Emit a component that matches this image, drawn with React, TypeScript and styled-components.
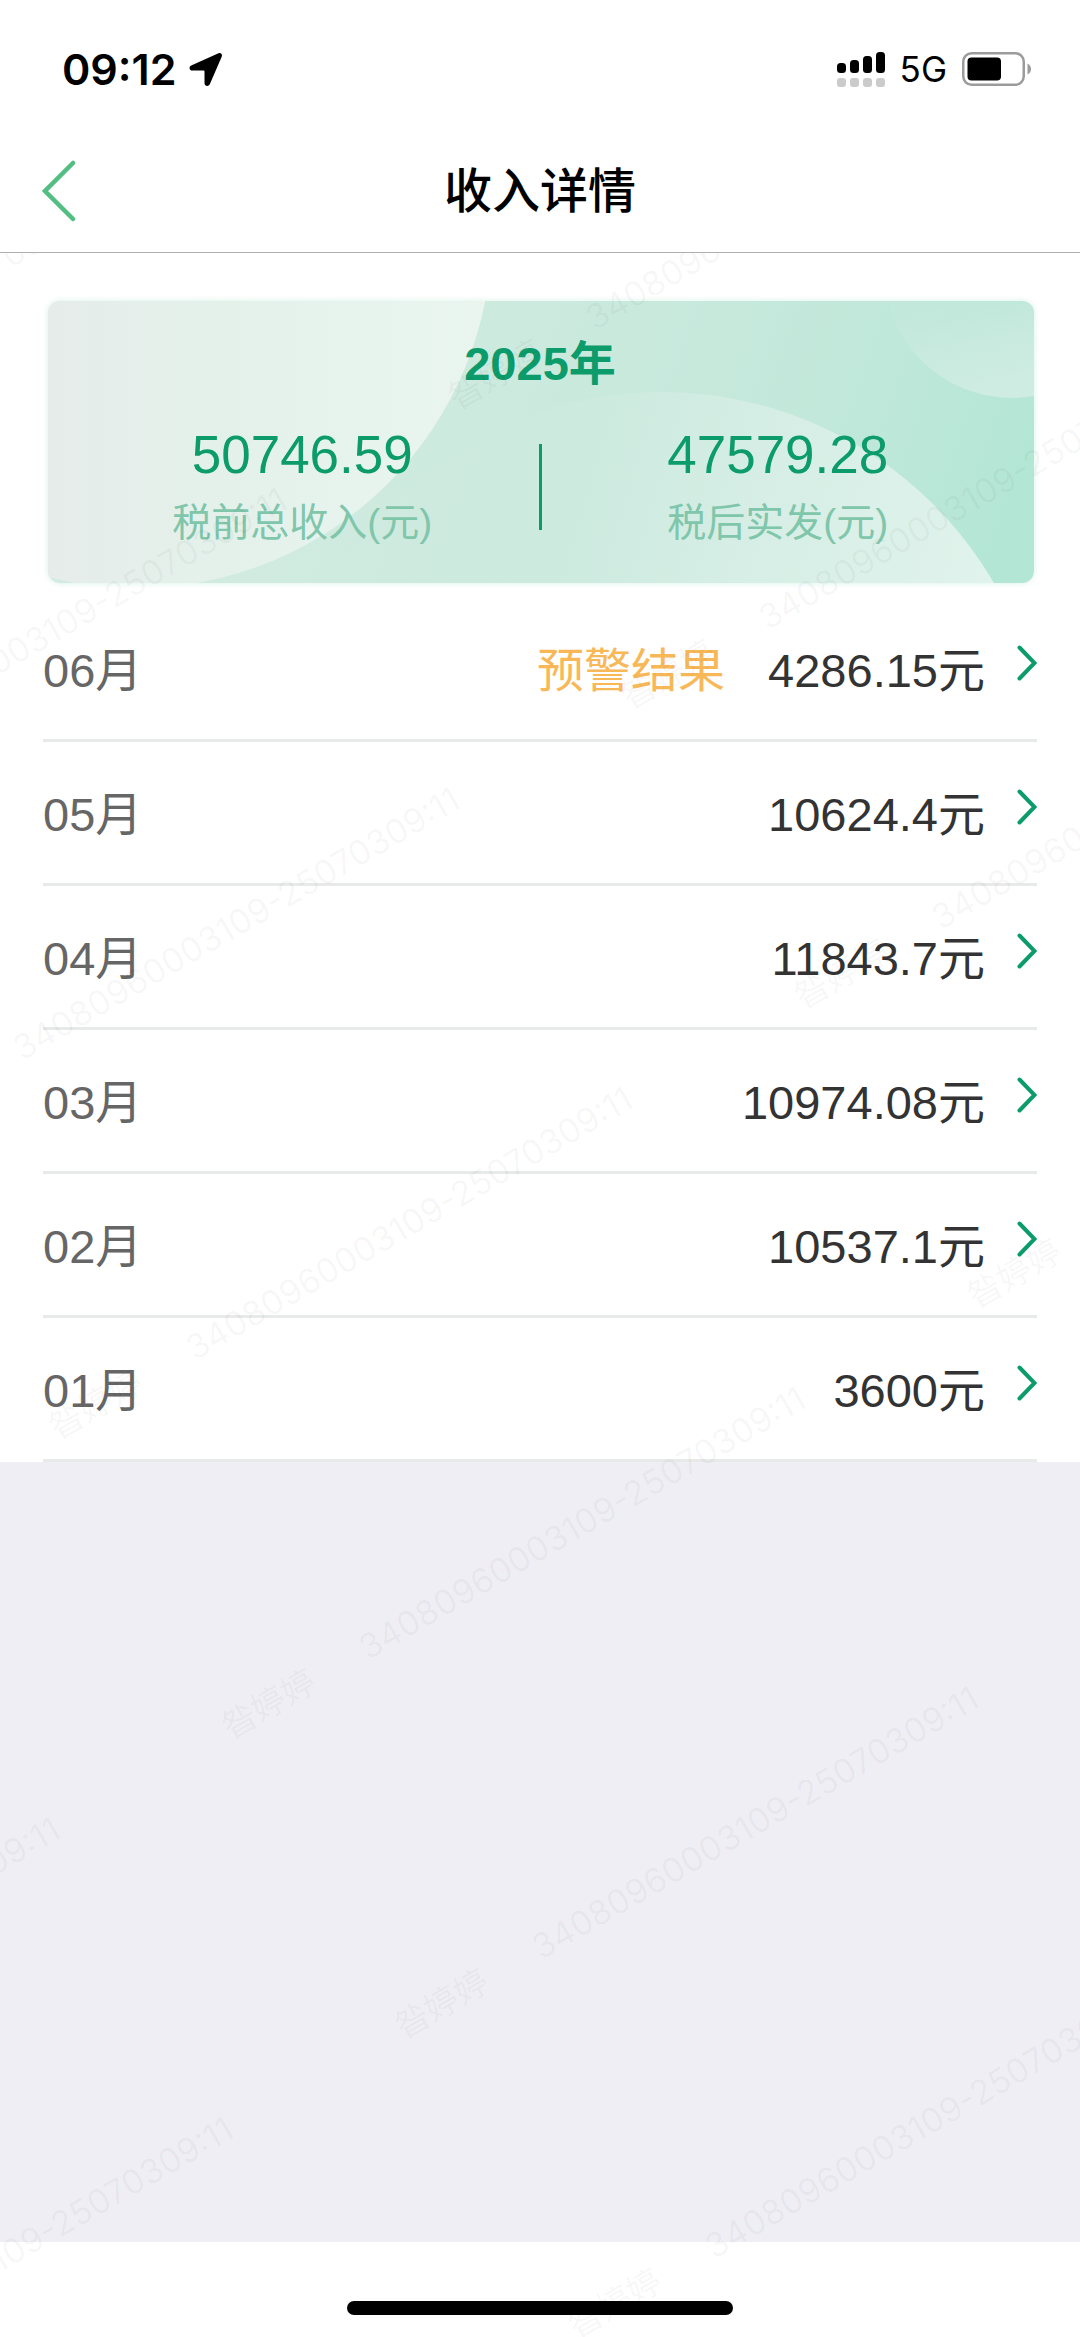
import React from "react";
import styled, { createGlobalStyle } from "styled-components";

const GREEN = "#0c9b6a";
const SYSTEM_FONT = `Inter, "Noto Sans CJK SC", sans-serif`;

const GlobalStyle = createGlobalStyle`
  * { box-sizing: border-box; }
  body {
    margin: 0;
    background: #ffffff;
    font-family: "Liberation Sans", "Noto Sans CJK SC", sans-serif;
  }
  h1, h2, p, ul, dl, dd { margin: 0; padding: 0; }
  button { border: 0; padding: 0; background: none; font: inherit; color: inherit; cursor: pointer; }
`;

const Screen = styled.div`
  display: flex;
  flex-direction: column;
  min-height: 100vh;
  background: #ffffff;
`;

const StatusBar = styled.div`
  display: flex;
  align-items: center;
  justify-content: space-between;
  height: 128px;
  padding: 10px 48px 0 62px;
  font-family: ${SYSTEM_FONT};
  color: #000000;
`;

const StatusGroup = styled.div<{ $gap: number }>`
  display: flex;
  align-items: center;
  gap: ${(p) => p.$gap}px;
`;

const Time = styled.time`
  font-size: 43px;
  line-height: 48px;
  font-weight: 600;
`;

const Network = styled.span`
  font-size: 35px;
  line-height: 40px;
`;

const NavBar = styled.header`
  display: grid;
  grid-template-columns: 96px 1fr 96px;
  align-items: center;
  height: 125px;
  padding-top: 4px;
  border-bottom: 1px solid #b0b0b0;
`;

const BackButton = styled.button`
  display: flex;
  align-items: center;
  height: 96px;
  padding-left: 40px;
`;

const NavTitle = styled.h1`
  text-align: center;
  font-size: 48px;
  line-height: 64px;
  font-weight: 500;
  color: #000000;
`;

const Body = styled.div`
  position: relative;
  display: flex;
  flex: 1;
  flex-direction: column;
  overflow: hidden;
`;

const Content = styled.main`
  flex: 1;
  background: #efeef4;
`;

const Sheet = styled.div`
  padding-top: 48px;
  background: #ffffff;
`;

const Card = styled.section`
  position: relative;
  height: 282px;
  margin: 0 46px 15px 48px;
  padding: 33px 20px 0 18px;
  border-radius: 12px;
  box-shadow: 0 0 6px #d6f1e7;
  color: ${GREEN};
`;

const CardArt = styled.svg`
  position: absolute;
  inset: 0;
  width: 100%;
  height: 100%;
  border-radius: 12px;
`;

const CardYear = styled.h2`
  position: relative;
  text-align: center;
  font-size: 47px;
  line-height: 60px;
  font-weight: 700;
`;

const Totals = styled.dl`
  position: relative;
  display: grid;
  grid-template-columns: 1fr 3px 1fr;
  align-items: center;
  padding-top: 29px;
`;

const Divider = styled.div`
  height: 86px;
  margin-top: 4px;
  background: ${GREEN};
`;

const Total = styled.div`
  display: flex;
  flex-direction: column-reverse;
  align-items: center;
  gap: 12px;
`;

const TotalLabel = styled.dt`
  font-size: 39px;
  line-height: 48px;
  color: #7fc6ab;
`;

const TotalValue = styled.dd`
  font-size: 53px;
  line-height: 64px;
`;

const MonthList = styled.ul`
  list-style: none;
  padding: 0 43px;
`;

const MonthItem = styled.li`
  border-bottom: 3px solid #e8eaea;
`;

const MonthButton = styled.button`
  display: flex;
  align-items: center;
  width: 100%;
  height: 141px;
  padding-top: 4px;
  font-size: 47px;
  line-height: 64px;
  color: #333333;
`;

const MonthName = styled.span`
  flex: 1;
  text-align: left;
  color: #666666;
`;

const Warning = styled.span`
  margin-right: 43px;
  color: #f8b858;
`;

const Chevron = styled.svg`
  width: 20px;
  height: 36px;
  margin: 0 0 16px 32px;
`;

const HomeArea = styled.footer`
  display: flex;
  justify-content: center;
  align-items: flex-start;
  height: 95px;
  padding-top: 59px;
  background: #ffffff;
`;

const HomeBar = styled.div`
  width: 36%;
  max-width: 386px;
  height: 14px;
  border-radius: 7px;
  background: #000000;
`;

const Watermark = styled.div`
  position: absolute;
  inset: 0;
  overflow: hidden;
  pointer-events: none;
`;

const WatermarkGrid = styled.div`
  display: grid;
  grid-template-columns: repeat(3, 861px);
  grid-template-rows: repeat(7, 346px);
  width: 2583px;
  transform-origin: 0 0;
  transform: rotate(-30deg) translate(-1405px, -166px);
  font-family: ${SYSTEM_FONT};
  font-size: 34px;
  line-height: 346px;
  color: rgba(0, 0, 0, 0.04);
`;

const WatermarkCell = styled.div<{ $column: number; $row: number }>`
  display: flex;
  grid-column: ${(p) => p.$column};
  grid-row: ${(p) => p.$row};
  gap: 57px;
  white-space: nowrap;
`;

const months = [
  { name: "06月", amount: "4286.15元", warning: "预警结果" },
  { name: "05月", amount: "10624.4元" },
  { name: "04月", amount: "11843.7元" },
  { name: "03月", amount: "10974.08元" },
  { name: "02月", amount: "10537.1元" },
  { name: "01月", amount: "3600元" },
];

const totals = [
  { label: "税前总收入(元)", value: "50746.59" },
  { label: "税后实发(元)", value: "47579.28" },
];

// Rows of each slanted column that cross the visible page.
const watermarkColumns = [
  { column: 1, rows: [5, 6] },
  { column: 2, rows: [1, 2, 3, 4, 5, 6, 7] },
  { column: 3, rows: [2, 3, 4, 5] },
];

function LocationArrow() {
  return (
    <svg width="34" height="35" viewBox="0 0 34 35" aria-hidden="true">
      <path
        d="M29.5 1.2 2.2 13.4C-.4 14.6.2 18.6 3.2 18.6H14.6C15.2 18.6 15.5 18.9 15.5 19.5V31C15.5 34.2 19.4 35 20.8 32.2L32.6 5C33.8 2 31.8 .2 29.5 1.2Z"
        fill="#000"
      />
    </svg>
  );
}

function SignalIcon() {
  const bars = [
    { x: 0, y: 11 },
    { x: 13, y: 8 },
    { x: 26, y: 4 },
    { x: 39, y: 0 },
  ];
  return (
    <svg width="48" height="35" viewBox="0 0 48 35" aria-hidden="true">
      {bars.map((b) => (
        <g key={b.x}>
          <rect x={b.x} y={b.y} width="9" height={21 - b.y} rx="3.5" fill="#000" />
          <rect x={b.x} y="26" width="9" height="9" rx="3" fill="#cbcbcb" />
        </g>
      ))}
    </svg>
  );
}

function BatteryIcon() {
  return (
    <svg width="70" height="34" viewBox="0 0 70 34" aria-hidden="true">
      <rect x="1.25" y="1.25" width="60.5" height="31.5" rx="8.5" fill="none" stroke="#9b9b9b" strokeWidth="2.5" />
      <rect x="5.5" y="5.5" width="33.5" height="23" rx="4" fill="#000" />
      <path d="M65.5 11.5Q69 13.5 69 17T65.5 22.5Z" fill="#9b9b9b" />
    </svg>
  );
}

function CardBackground() {
  return (
    <CardArt viewBox="0 0 986 282" preserveAspectRatio="none" aria-hidden="true">
      <defs>
        <linearGradient id="base" gradientUnits="userSpaceOnUse" x1="250" x2="960" y1="0" y2="250">
          <stop offset="0" stopColor="#d2ebe1" />
          <stop offset="0.45" stopColor="#c9e9dd" />
          <stop offset="0.75" stopColor="#c0e8da" />
          <stop offset="1" stopColor="#b3e6d5" />
        </linearGradient>
        <linearGradient id="leftDisc" gradientUnits="userSpaceOnUse" x1="0" x2="440" y1="0" y2="0">
          <stop offset="0" stopColor="#e6ecea" />
          <stop offset="0.4" stopColor="#e4f1eb" />
          <stop offset="1" stopColor="#eaf5f0" />
        </linearGradient>
        <linearGradient id="rightDisc" gradientUnits="userSpaceOnUse" x1="480" x2="940" y1="140" y2="282">
          <stop offset="0" stopColor="#d0ebe1" stopOpacity="0.3" />
          <stop offset="0.4" stopColor="#d4ede4" />
          <stop offset="1" stopColor="#e0f3ec" />
        </linearGradient>
        <linearGradient id="cornerDisc" gradientUnits="userSpaceOnUse" x1="900" x2="920" y1="0" y2="97">
          <stop offset="0" stopColor="#c6e9dd" stopOpacity="0.4" />
          <stop offset="0.5" stopColor="#c9eadf" />
          <stop offset="1" stopColor="#cfece2" />
        </linearGradient>
      </defs>
      <rect width="986" height="282" fill="url(#base)" />
      <circle cx="614" cy="475" r="384" fill="url(#rightDisc)" />
      <circle cx="88" cy="-69" r="356" fill="url(#leftDisc)" />
      <circle cx="964" cy="-31" r="128" fill="url(#cornerDisc)" />
    </CardArt>
  );
}

export default function App() {
  return (
    <Screen>
      <GlobalStyle />
      <StatusBar>
        <StatusGroup $gap={12}>
          <Time>09:12</Time>
          <LocationArrow />
        </StatusGroup>
        <StatusGroup $gap={15}>
          <SignalIcon />
          <Network>5G</Network>
          <BatteryIcon />
        </StatusGroup>
      </StatusBar>
      <NavBar>
        <BackButton aria-label="返回">
          <svg width="38" height="64" viewBox="0 0 38 64" aria-hidden="true">
            <path d="M33 3 5 31 33 59" fill="none" stroke="#53be82" strokeWidth="4.5" strokeLinecap="round" />
          </svg>
        </BackButton>
        <NavTitle>收入详情</NavTitle>
      </NavBar>
      <Body>
        <Content>
          <Sheet>
            <Card>
              <CardBackground />
              <CardYear>2025年</CardYear>
              <Totals>
                {totals.map((t, i) => (
                  <React.Fragment key={t.label}>
                    {i > 0 && <Divider />}
                    <Total>
                      <TotalLabel>{t.label}</TotalLabel>
                      <TotalValue>{t.value}</TotalValue>
                    </Total>
                  </React.Fragment>
                ))}
              </Totals>
            </Card>
            <MonthList>
              {months.map((m) => (
                <MonthItem key={m.name}>
                  <MonthButton>
                    <MonthName>{m.name}</MonthName>
                    {m.warning && <Warning>{m.warning}</Warning>}
                    <span>{m.amount}</span>
                    <Chevron viewBox="0 0 20 36" aria-hidden="true">
                      <path d="M2.5 2.5 17.5 18 2.5 33.5" fill="none" stroke={GREEN} strokeWidth="4" strokeLinecap="round" />
                    </Chevron>
                  </MonthButton>
                </MonthItem>
              ))}
            </MonthList>
          </Sheet>
        </Content>
        <HomeArea>
          <HomeBar />
        </HomeArea>
        <Watermark aria-hidden="true">
          <WatermarkGrid>
            {watermarkColumns.map(({ column, rows }) =>
              rows.map((row) => (
                <WatermarkCell key={`${column}-${row}`} $column={column} $row={row}>
                  <span>昝婷婷</span>
                  <span>34080960003109-25070309:11</span>
                </WatermarkCell>
              ))
            )}
          </WatermarkGrid>
        </Watermark>
      </Body>
    </Screen>
  );
}
